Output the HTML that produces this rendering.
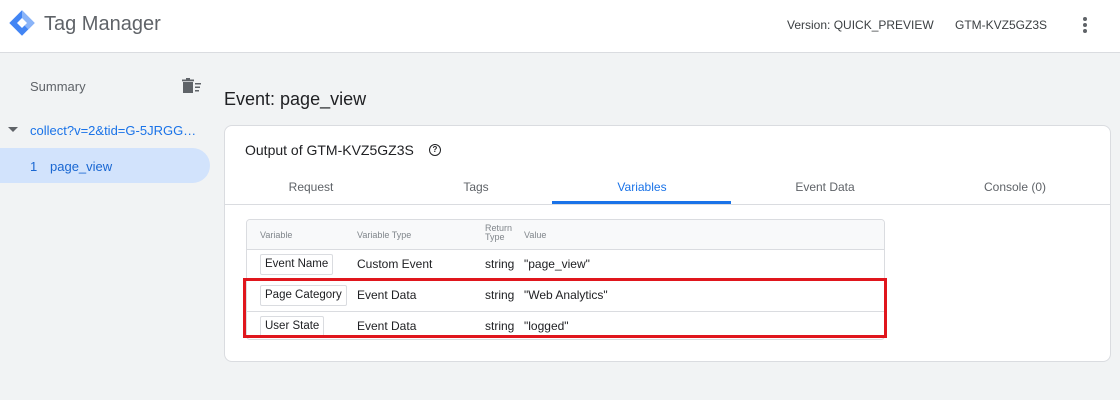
<!DOCTYPE html>
<html><head><style>
*{box-sizing:border-box;margin:0;padding:0}
body{width:1120px;height:400px;overflow:hidden;background:#f1f3f4;font-family:"Liberation Sans",sans-serif;color:#202124;position:relative}
.abs{position:absolute}
.hdr{left:0;top:0;width:1120px;height:53px;background:#fff;border-bottom:1px solid #dadce0}
.card{left:224px;top:125px;width:887px;height:237px;background:#fff;border:1px solid #dadce0;border-radius:8px}
.tab{top:180px;font-size:12px;color:#5f6368;transform:translateX(-50%)}
.tbl{left:246px;top:219px;width:639px;height:121px;border:1px solid #dadce0;border-radius:4px;overflow:hidden;font-size:12px}
.row{position:absolute;left:0;width:100%;border-top:1px solid #dadce0}
.row span{position:absolute;top:7px}
.chip{position:absolute;top:4px;left:13px;border:1px solid #dadce0;border-radius:2px;padding:3px 4px;font-size:11.5px;line-height:13px}
</style></head><body>
<div class="abs hdr"></div>
<svg class="abs" style="left:7px;top:8px" width="30" height="30" viewBox="0 0 30 30">
<path d="M15 2.3 L27.7 15 L15 27.7 L2.3 15Z" fill="#4285f4"/>
<path d="M15 2.3 L27.7 15 L21.3 21.4 L15 15Z" fill="#8ab4f8"/>
<path d="M15 10 L20 15 L15 20 L10 15Z" fill="#fff"/>
</svg>
<div class="abs" style="left:44px;top:13px;font-size:20px;color:#5f6368">Tag Manager</div>
<div class="abs" style="left:787px;top:18px;font-size:12px;color:#3c4043">Version: QUICK_PREVIEW</div>
<div class="abs" style="left:955px;top:18px;font-size:12px;color:#3c4043">GTM-KVZ5GZ3S</div>
<div class="abs" style="left:1083px;top:17px;width:4px">
<div style="width:4px;height:4px;border-radius:2px;background:#5f6368;margin-bottom:2px"></div>
<div style="width:4px;height:4px;border-radius:2px;background:#5f6368;margin-bottom:2px"></div>
<div style="width:4px;height:4px;border-radius:2px;background:#5f6368"></div></div>

<div class="abs" style="left:30px;top:79px;font-size:13px;color:#5f6368">Summary</div>
<svg class="abs" style="left:182px;top:78px" width="20" height="16" viewBox="0 0 20 16"><rect x="1" y="4" width="10" height="11" fill="#5f6368"/><rect x="0" y="1.5" width="12" height="1.8" fill="#5f6368"/><rect x="4" y="0" width="4" height="2" fill="#5f6368"/><rect x="13" y="5" width="6" height="1.5" fill="#5f6368"/><rect x="13" y="8.5" width="5" height="1.5" fill="#5f6368"/><rect x="13" y="12" width="4" height="1.5" fill="#5f6368"/></svg>
<div class="abs" style="left:8px;top:127px;width:0;height:0;border-left:5px solid transparent;border-right:5px solid transparent;border-top:5px solid #5f6368"></div>
<div class="abs" style="left:30px;top:123px;font-size:13px;color:#1a73e8">collect?v=2&amp;tid=G-5JRGG…</div>
<div class="abs" style="left:0;top:148px;width:210px;height:35px;background:#d2e3fc;border-radius:0 18px 18px 0"></div>
<div class="abs" style="left:30px;top:159px;font-size:13px;color:#1967d2">1</div>
<div class="abs" style="left:50px;top:159px;font-size:13px;color:#1967d2">page_view</div>

<div class="abs" style="left:224px;top:89px;font-size:18px;color:#202124">Event: page_view</div>
<div class="abs card"></div>
<div class="abs" style="left:245px;top:142px;font-size:14px">Output of GTM-KVZ5GZ3S</div>
<div class="abs" style="left:429px;top:144px;width:12px;height:12px;border:1.5px solid #202124;border-radius:50%;font-size:8px;font-weight:bold;text-align:center;line-height:9px">?</div>
<div class="abs tab" style="left:311px">Request</div>
<div class="abs tab" style="left:476px">Tags</div>
<div class="abs tab" style="left:642px;color:#1a73e8">Variables</div>
<div class="abs tab" style="left:825px">Event Data</div>
<div class="abs tab" style="left:1015px">Console (0)</div>
<div class="abs" style="left:225px;top:204px;width:885px;height:1px;background:#dadce0"></div>
<div class="abs" style="left:552px;top:201px;width:179px;height:3px;background:#1a73e8"></div>

<div class="abs tbl">
<div style="position:absolute;left:0;top:0;width:100%;height:29px;background:#f8f9fa;font-size:9px;color:#80868b">
<span style="position:absolute;left:13px;top:10px">Variable</span>
<span style="position:absolute;left:110px;top:10px">Variable Type</span>
<span style="position:absolute;left:238px;top:4px;line-height:9px">Return<br>Type</span>
<span style="position:absolute;left:277px;top:10px">Value</span></div>
<div class="row" style="top:29px;height:31px"><div class="chip">Event Name</div><span style="left:110px">Custom Event</span><span style="left:238px">string</span><span style="left:277px">"page_view"</span></div>
<div class="row" style="top:60px;height:31px"><div class="chip">Page Category</div><span style="left:110px">Event Data</span><span style="left:238px">string</span><span style="left:277px">"Web Analytics"</span></div>
<div class="row" style="top:91px;height:31px"><div class="chip">User State</div><span style="left:110px">Event Data</span><span style="left:238px">string</span><span style="left:277px">"logged"</span></div>
</div>
<div class="abs" style="left:243px;top:278px;width:644px;height:60px;border:3px solid #e0161d"></div>
</body></html>
